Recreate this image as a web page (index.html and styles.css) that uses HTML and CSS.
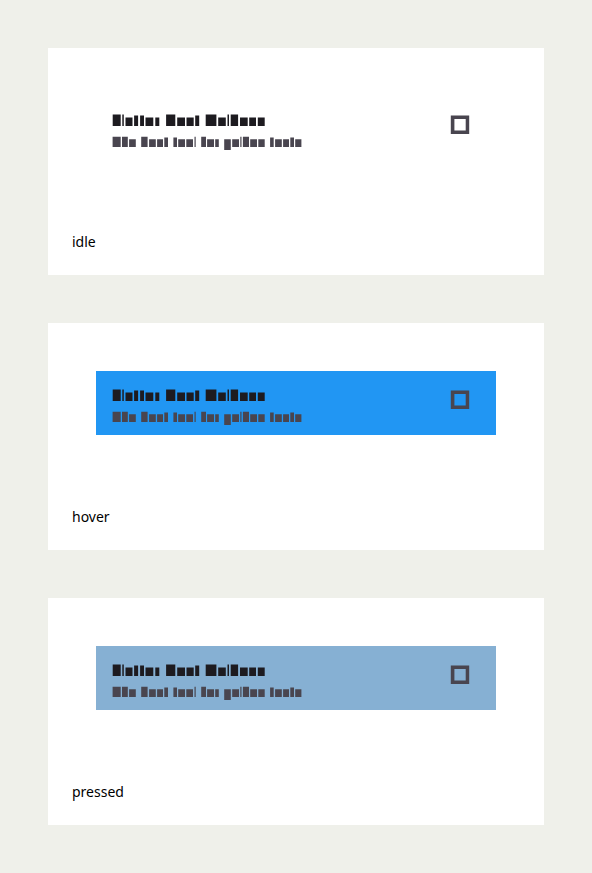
FILE: index.html
```
<!DOCTYPE html>
<html lang="en">
<head>
<meta charset="utf-8">
<title>List tile states</title>
<link rel="stylesheet" href="styles.css">
</head>
<body>
<svg class="defs" width="0" height="0" aria-hidden="true">
  <symbol id="title" viewBox="0 0 192 16">
    <path d="M.7 2.4H8.7V14H.7zM10.3 2.4H11.8V14H10.3zM13.5 5.4H20.5V14H13.5zM22.1 3.5H26.1V14H22.1zM28.1 3.5H32V14H28.1zM33.5 5.4H41.3V14H33.5zM43.3 5.4H47.3V14H43.3zM54.1 2.4H63.3V14H54.1zM65.2 5.4H73V14H65.2zM74.5 5.4H81.7V14H74.5zM83.2 3.5H87.2V14H83.2zM93.7 2.4H104.4V14H93.7zM106.2 5.4H113.8V14H106.2zM115.5 2.4H117V14H115.5zM118.7 2.4H126.1V14H118.7zM128 5.4H135.7V14H128zM137.2 5.4H144V14H137.2zM145.8 5.4H152.7V14H145.8z"/>
  </symbol>
  <symbol id="subtitle" viewBox="0 0 192 16">
    <path d="M.6 2.7H8.7V13H.6zM10 2.7H15.8V13H10zM17.1 5.3H23.8V13H17.1zM29.2 2.7H35.6V13H29.2zM37.1 5.3H43.8V13H37.1zM45.1 5.3H51V13H45.1zM52.3 3.6H56V13H52.3zM61.4 3.6H65V13H61.4zM66.2 5.3H73V13H66.2zM74.3 5.3H81V13H74.3zM82.5 2.7H83.7V13H82.5zM89.2 2.7H94V13H89.2zM95.1 5.3H102V13H95.1zM103.2 5.3H106.8V13H103.2zM112.2 5.3H118.8V16H112.2zM120.2 5.3H127V13H120.2zM128.3 2.7H129.5V13H128.3zM130.9 2.7H137V13H130.9zM138.2 5.3H145V13H138.2zM146.3 5.3H152.7V13H146.3zM158.1 3.6H161.7V13H158.1zM163.1 5.3H169.8V13H163.1zM171.1 5.3H177V13H171.1zM178.3 3.6H182V13H178.3zM183.2 5.3H189.4V13H183.2z"/>
  </symbol>
  <symbol id="checkbox" viewBox="0 0 24 24">
    <path fill-rule="evenodd" d="M2.8 3.6H21.2V22H2.8zM6.4 7V18.6H17.7V7z"/>
  </symbol>
</svg>
<main class="states">
  <section class="panel">
    <div class="tile">
      <div class="text"><svg class="title"><use href="#title"/></svg><svg class="subtitle"><use href="#subtitle"/></svg></div>
      <svg class="checkbox"><use href="#checkbox"/></svg>
    </div>
    <p class="label">idle</p>
  </section>
  <section class="panel">
    <div class="tile hover">
      <div class="text"><svg class="title"><use href="#title"/></svg><svg class="subtitle"><use href="#subtitle"/></svg></div>
      <svg class="checkbox"><use href="#checkbox"/></svg>
    </div>
    <p class="label">hover</p>
  </section>
  <section class="panel">
    <div class="tile pressed">
      <div class="text"><svg class="title"><use href="#title"/></svg><svg class="subtitle"><use href="#subtitle"/></svg></div>
      <svg class="checkbox"><use href="#checkbox"/></svg>
    </div>
    <p class="label">pressed</p>
  </section>
</main>
</body>
</html>
```
FILE: styles.css
```
* {
  box-sizing: border-box;
}

body {
  margin: 0;
  background: #eff0ea;
  color: #000;
  font: 14px/20px "Noto Sans", sans-serif;
}

.defs {
  display: block;
}

.states {
  display: flex;
  flex-direction: column;
  gap: 48px;
  padding: 48px;
}

.panel {
  height: 227px;
  padding: 48px 48px 0;
  background: #fff;
}

.tile {
  display: flex;
  justify-content: space-between;
  height: 64px;
  padding: 16px 24px 0 16px;
}

.tile.hover {
  background: #2196f3;
}

.tile.pressed {
  background: #86b0d3;
}

.text {
  display: flex;
  flex-direction: column;
  gap: 6px;
}

.text svg {
  display: block;
  width: 192px;
  height: 16px;
}

.title {
  fill: #1d1b20;
}

.subtitle {
  fill: #49454f;
}

.checkbox {
  display: block;
  width: 24px;
  height: 24px;
  fill: #49454f;
}

.label {
  margin: 72px 0 0 -24px;
}
```
